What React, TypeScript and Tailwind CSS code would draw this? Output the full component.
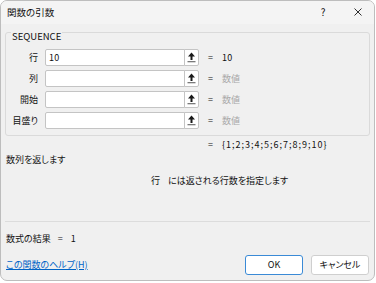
import React from 'react';

const font = {
  fontFamily: '"Noto Sans CJK JP", "Noto Sans", sans-serif',
};

function CollapseIcon() {
  return (
    <svg width="9" height="11" viewBox="0 0 9 11">
      <path d="M4.5 0.5 L8 4.5 L5.5 4.5 L5.5 8 L3.5 8 L3.5 4.5 L1 4.5 Z" fill="#1a1a1a" />
      <rect x="0.5" y="9" width="8" height="1.3" fill="#7a7a7a" />
    </svg>
  );
}

const args = [
  { label: '行', value: '10', result: '10', filled: true },
  { label: '列', value: '', result: '数値', filled: false },
  { label: '開始', value: '', result: '数値', filled: false },
  { label: '目盛り', value: '', result: '数値', filled: false },
];

function ArgRow({ label, value, result, filled }: { label: string; value: string; result: string; filled: boolean }) {
  return (
    <div className="flex items-center h-[17px]">
      <div className="w-[32px] text-right text-[#111]">{label}</div>
      <div className="ml-[7px] flex h-[17px]">
        <div className="w-[140px] h-[17px] bg-white border border-[#c4c4c4] rounded-l-[2px] pl-[3px] leading-[15px] text-[#111] tracking-[0.3px]">
          {value}
        </div>
        <div className="w-[15px] h-[17px] -ml-px bg-white border border-[#c4c4c4] rounded-r-[2px] flex items-center justify-center">
          <CollapseIcon />
        </div>
      </div>
      <span className="ml-[9px] text-[#111]">=</span>
      <span className={`ml-[9px] ${filled ? 'text-[#111] tracking-[0.3px]' : 'text-[#a8a8a8]'}`}>{result}</span>
    </div>
  );
}

export default function App() {
  return (
    <div className="w-[376px] h-[283px] bg-white" style={font}>
      <div className="w-[375px] h-[281px] border border-[#bdbdbd] rounded-[7px] overflow-hidden bg-[#f0f0f0] flex flex-col text-[9px] leading-[14px] [font-feature-settings:'palt']">
        {/* Title bar */}
        <div className="h-[23px] bg-[#f4f4f4] flex items-center pl-[6px] pb-[1px] text-[#111]">
          <span className="text-[9.5px]">関数の引数</span>
          <span className="ml-auto text-[10px] w-[10px] text-center">?</span>
          <span className="ml-[24px] mr-[10px] w-[12px] flex items-center justify-center">
            <svg width="8" height="8" viewBox="0 0 8 8">
              <path d="M0.5 0.5 L7.5 7.5 M7.5 0.5 L0.5 7.5" stroke="#1a1a1a" strokeWidth="0.9" />
            </svg>
          </span>
        </div>

        <div className="px-[4px] flex flex-col">
          {/* Group box */}
          <div className="relative mt-[8px] h-[104px] border border-[#dadada] rounded-[3px] pt-[16px] flex flex-col gap-[4px]">
            <span className="absolute left-[5px] top-[-3px] px-[1px] bg-[#f0f0f0] text-[9.5px] leading-[12px] text-[#111]">
              SEQUENCE
            </span>
            {args.map((a) => (
              <ArgRow key={a.label} {...a} />
            ))}
          </div>

          <div className="h-[18px] leading-[18px] flex text-[#111]">
            <span className="ml-[203px]">=</span>
            <span className="ml-[9px] tracking-[1px]">{'{1;2;3;4;5;6;7;8;9;10}'}</span>
          </div>
          <div className="-mt-[1px] h-[14px] pl-[1px] text-[#111]">数列を返します</div>
          <div className="mt-[7px] h-[14px] flex text-[#111]">
            <span className="ml-[146px]">行</span>
            <span className="ml-[8px]">には返される行数を指定します</span>
          </div>

          <div className="mt-[33px] border-t border-[#dcdcdc]" />

          <div className="mt-[10px] h-[14px] pl-[1px] flex text-[#111]">
            <span>数式の結果</span>
            <span className="ml-[7px]">=</span>
            <span className="ml-[8px]">1</span>
          </div>

          <div className="mt-[9px] h-[20px] flex items-center">
            <span className="pl-[1px] text-[#0063c6] underline underline-offset-[1px]">この関数のヘルプ(H)</span>
            <button className="ml-auto w-[58px] h-[20px] bg-white border border-[#3a8ad6] rounded-[3px] text-[#111] text-[9px]">
              OK
            </button>
            <button className="ml-[8px] mr-[1px] w-[58px] h-[20px] bg-white border border-[#cfcfcf] rounded-[3px] text-[#111] text-[9px]">
              キャンセル
            </button>
          </div>
        </div>
      </div>
    </div>
  );
}
